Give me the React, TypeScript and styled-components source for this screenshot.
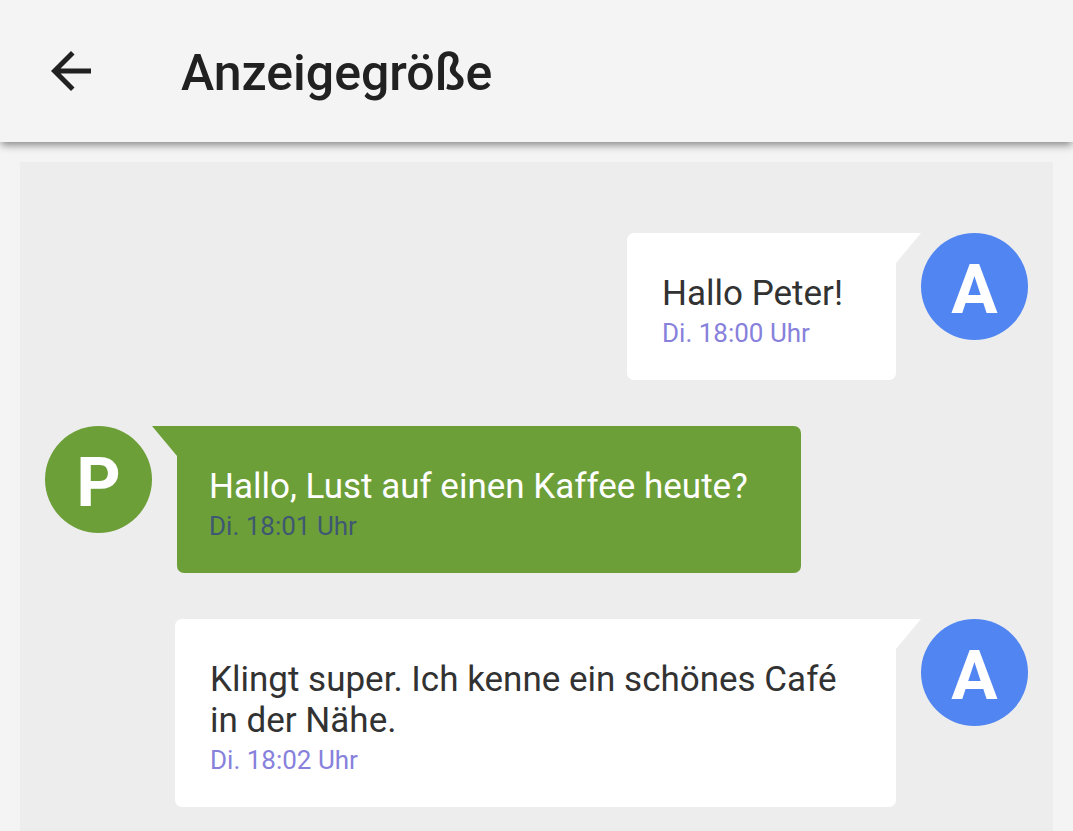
import React from "react";
import styled, { createGlobalStyle } from "styled-components";

const GlobalStyle = createGlobalStyle`
  * { box-sizing: border-box; }
  html { height: 100%; }
  body {
    margin: 0;
    min-height: 100%;
    background: #f4f4f4;
    font-family: Roboto, "Liberation Sans", sans-serif;
    color: #212121;
  }
`;

const Page = styled.div`
  display: flex;
  flex-direction: column;
  height: 100vh;
  overflow: hidden;
`;

const AppBar = styled.header`
  flex: none;
  display: flex;
  align-items: center;
  gap: 80px;
  padding: 40px 41px;
  background: #f4f4f4;
  box-shadow: 0 4px 8px -1px rgba(0, 0, 0, 0.45);
  z-index: 1;
`;

const BackButton = styled.button`
  display: flex;
  padding: 0;
  border: 0;
  background: none;
  color: #212121;
  cursor: pointer;
  svg { width: 60px; height: 60px; }
`;

const Title = styled.h1`
  margin: 0;
  padding-top: 4px;
  font-size: 50px;
  line-height: 58px;
  font-weight: 500;
`;

const Preview = styled.main`
  flex: 1;
  display: flex;
  flex-direction: column;
  gap: 46px;
  margin: 20px 20px 0;
  padding: 71px 25px 0;
  background: #ededed;
`;

const Message = styled.article<{ $own: boolean }>`
  display: flex;
  flex-direction: ${(p) => (p.$own ? "row-reverse" : "row")};
  align-items: flex-start;
`;

const Avatar = styled.div<{ $color: string }>`
  flex: none;
  width: 107px;
  height: 107px;
  border-radius: 50%;
  background: ${(p) => p.$color};
  color: #ffffff;
  font-size: 69px;
  font-weight: 700;
  line-height: 113px;
  text-align: center;
`;

const Tail = styled.svg`
  flex: none;
  width: 25px;
  height: 30px;
`;

const Bubble = styled.div<{ $own: boolean }>`
  max-width: 721px;
  padding: 40px 53px 27px ${(p) => (p.$own ? 35 : 32)}px;
  border-radius: ${(p) => (p.$own ? "7px 0 7px 7px" : "0 7px 7px 7px")};
  background: ${(p) => (p.$own ? "#ffffff" : "#6d9f38")};
`;

const Text = styled.p<{ $own: boolean }>`
  margin: 0;
  font-size: 35px;
  line-height: 41px;
  color: ${(p) => (p.$own ? "#323232" : "#ffffff")};
`;

const Time = styled.time<{ $own: boolean }>`
  display: block;
  font-size: 26px;
  line-height: 39px;
  color: ${(p) => (p.$own ? "#8781dc" : "#3f5872")};
`;

const messages = [
  { name: "A", own: true, text: "Hallo Peter!", time: "Di. 18:00 Uhr" },
  { name: "P", own: false, text: "Hallo, Lust auf einen Kaffee heute?", time: "Di. 18:01 Uhr" },
  { name: "A", own: true, text: "Klingt super. Ich kenne ein schönes Café in der Nähe.", time: "Di. 18:02 Uhr" },
];

export default function App() {
  return (
    <Page>
      <GlobalStyle />
      <AppBar>
        <BackButton type="button" aria-label="Zurück">
          <svg viewBox="0 0 24 24" fill="currentColor" aria-hidden="true">
            <path d="M20 11H7.83l5.59-5.59L12 4l-8 8 8 8 1.41-1.41L7.83 13H20v-2z" />
          </svg>
        </BackButton>
        <Title>Anzeigegröße</Title>
      </AppBar>
      <Preview>
        {messages.map((m) => (
          <Message key={m.time} $own={m.own}>
            <Avatar $color={m.own ? "#5085f2" : "#6d9f38"}>{m.name}</Avatar>
            <Tail viewBox="0 0 25 30" aria-hidden="true">
              {m.own ? <path d="M0 0h25L0 30z" fill="#ffffff" /> : <path d="M0 0h25v30z" fill="#6d9f38" />}
            </Tail>
            <Bubble $own={m.own}>
              <Text $own={m.own}>{m.text}</Text>
              <Time $own={m.own}>{m.time}</Time>
            </Bubble>
          </Message>
        ))}
      </Preview>
    </Page>
  );
}
